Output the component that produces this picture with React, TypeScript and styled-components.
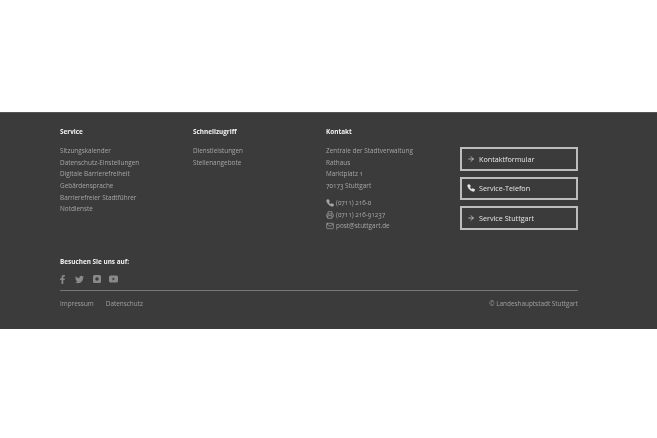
import styled, { createGlobalStyle } from "styled-components";
import { FaFacebookF, FaTwitter } from "react-icons/fa";
import { FiArrowRight, FiMail, FiPhone, FiPrinter } from "react-icons/fi";

const GlobalStyle = createGlobalStyle`
  html, body {
    margin: 0;
    padding: 0;
    background: #fff;
  }
  body {
    font-family: "Open Sans", "Noto Sans", sans-serif;
  }
`;

const service = [
  "Sitzungskalender",
  "Datenschutz-Einstellungen",
  "Digitale Barrierefreiheit",
  "Gebärdensprache",
  "Barrierefreier Stadtführer",
  "Notdienste",
];

const quickLinks = ["Dienstleistungen", "Stellenangebote"];

const address = [
  "Zentrale der Stadtverwaltung",
  "Rathaus",
  "Marktplatz 1",
  "70173 Stuttgart",
];

const InstagramIcon = () => (
  <svg width="8" height="8" viewBox="0 0 16 16">
    <path
      fillRule="evenodd"
      fill="currentColor"
      d="M3 0h10a3 3 0 0 1 3 3v10a3 3 0 0 1-3 3H3a3 3 0 0 1-3-3V3a3 3 0 0 1 3-3zm5 4.5a3.5 3.5 0 1 0 0 7 3.5 3.5 0 0 0 0-7z"
    />
  </svg>
);

const YoutubeIcon = () => (
  <svg width="9" height="8" viewBox="0 0 18 16">
    <path
      fillRule="evenodd"
      fill="currentColor"
      d="M3 1h12a3 3 0 0 1 3 3v8a3 3 0 0 1-3 3H3a3 3 0 0 1-3-3V4a3 3 0 0 1 3-3zm4 4v6l5-3z"
    />
  </svg>
);

const App = () => {
  return (
    <Page>
      <GlobalStyle />
      <Footer>
        <Columns>
          <Column>
            <Heading>Service</Heading>
            <LinkList>
              {service.map((item) => (
                <LinkItem key={item}>{item}</LinkItem>
              ))}
            </LinkList>
          </Column>

          <Column>
            <Heading>Schnellzugriff</Heading>
            <LinkList>
              {quickLinks.map((item) => (
                <LinkItem key={item}>{item}</LinkItem>
              ))}
            </LinkList>
          </Column>

          <Column>
            <Heading>Kontakt</Heading>
            <LinkList>
              {address.map((item) => (
                <LinkItem key={item}>{item}</LinkItem>
              ))}
            </LinkList>
            <ContactList>
              <LinkItem>
                <ContactIcon>
                  <FiPhone size={8} fill="currentColor" />
                </ContactIcon>
                (0711) 216-0
              </LinkItem>
              <LinkItem>
                <ContactIcon>
                  <FiPrinter size={8} />
                </ContactIcon>
                (0711) 216-91237
              </LinkItem>
              <LinkItem>
                <ContactIcon>
                  <FiMail size={8} />
                </ContactIcon>
                post@stuttgart.de
              </LinkItem>
            </ContactList>
          </Column>

          <ButtonColumn>
            <ActionButton>
              <ButtonIcon>
                <FiArrowRight size={8} />
              </ButtonIcon>
              Kontaktformular
            </ActionButton>
            <ActionButton>
              <ButtonIcon>
                <FiPhone size={8} fill="currentColor" />
              </ButtonIcon>
              Service-Telefon
            </ActionButton>
            <ActionButton>
              <ButtonIcon>
                <FiArrowRight size={8} />
              </ButtonIcon>
              Service Stuttgart
            </ActionButton>
          </ButtonColumn>
        </Columns>

        <Social>
          <Heading>Besuchen Sie uns auf:</Heading>
          <SocialIcons>
            <SocialSlot>
              <FaFacebookF size={9} />
            </SocialSlot>
            <SocialSlot>
              <FaTwitter size={9} />
            </SocialSlot>
            <SocialSlot>
              <InstagramIcon />
            </SocialSlot>
            <SocialSlot>
              <YoutubeIcon />
            </SocialSlot>
          </SocialIcons>
        </Social>

        <BottomBar>
          <BottomLinks>
            <span>Impressum</span>
            <span>Datenschutz</span>
          </BottomLinks>
          <span>© Landeshauptstadt Stuttgart</span>
        </BottomBar>
      </Footer>
    </Page>
  );
};

export default App;

const Page = styled.div`
  width: 657px;
  height: 438px;
  padding-top: 112px;
  box-sizing: border-box;
  overflow: hidden;
  filter: blur(0.4px);
`;

const Footer = styled.footer`
  height: 217px;
  box-sizing: border-box;
  padding: 14px 79px 0 60px;
  background: #3b3b3b;
  border-top: 1px solid #555;
`;

const Columns = styled.div`
  display: grid;
  grid-template-columns: 133px 133px 134px 118px;
`;

const Column = styled.div`
  display: flex;
  flex-direction: column;
`;

const Heading = styled.h2`
  margin: 0;
  font-size: 6.4px;
  line-height: 10px;
  font-weight: 700;
  color: #f2f2f2;
`;

const LinkList = styled.ul`
  display: flex;
  flex-direction: column;
  gap: 1.65px;
  margin: 9px 0 0;
  padding: 0;
  list-style: none;
`;

const LinkItem = styled.li`
  display: flex;
  align-items: center;
  height: 10px;
  font-size: 6.4px;
  line-height: 10px;
  color: #a6a6a6;
  font-variant-numeric: oldstyle-nums;
`;

const ContactList = styled(LinkList)`
  margin-top: 7px;
`;

const ContactIcon = styled.span`
  display: inline-flex;
  justify-content: center;
  width: 8px;
  margin-right: 2px;
`;

const ButtonColumn = styled.div`
  display: flex;
  flex-direction: column;
  gap: 6px;
  padding-top: 20px;
`;

const ActionButton = styled.div`
  display: flex;
  align-items: center;
  height: 23.5px;
  box-sizing: border-box;
  padding-left: 5px;
  border: 2px solid #bdbdbd;
  font-size: 7.2px;
  font-weight: 500;
  color: #e6e6e6;
`;

const ButtonIcon = styled.span`
  display: inline-flex;
  justify-content: center;
  width: 8px;
  margin-right: 4px;
`;

const Social = styled.div`
  margin-top: 26px;
`;

const SocialIcons = styled.div`
  display: flex;
  align-items: center;
  height: 10px;
  margin: 7px 0 0 -6px;
  color: #8a8a8a;
`;

const SocialSlot = styled.span`
  display: inline-flex;
  justify-content: center;
  width: 17px;
`;

const BottomBar = styled.div`
  display: flex;
  justify-content: space-between;
  margin-top: 6px;
  padding-top: 8px;
  border-top: 1px solid #777;
  font-size: 6.4px;
  line-height: 10px;
  color: #a0a0a0;
`;

const BottomLinks = styled.div`
  display: flex;
  gap: 12px;
`;
